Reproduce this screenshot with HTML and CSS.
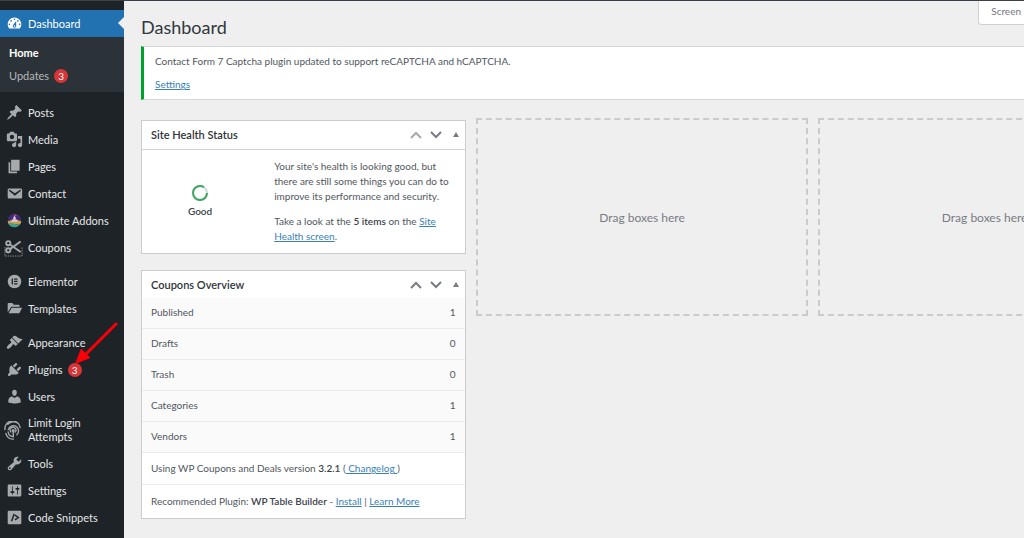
FILE: index.html
```html
<!DOCTYPE html>
<html lang="en">
<head>
<meta charset="utf-8">
<title>Dashboard</title>
<link rel="stylesheet" href="styles.css">
</head>
<body>
<div class="admin">
  <nav class="sidebar" aria-label="Main menu">
    <a class="item current" href="#">
      <svg class="icon" viewBox="0 0 20 20"><path d="M3.76 16h12.48c1.1-1.37 1.76-3.11 1.76-5 0-4.42-3.58-8-8-8s-8 3.58-8 8c0 1.89.66 3.63 1.76 5zM10 4c.55 0 1 .45 1 1s-.45 1-1 1-1-.45-1-1 .45-1 1-1zM6 6c.55 0 1 .45 1 1s-.45 1-1 1-1-.45-1-1 .45-1 1-1zm8 0c.55 0 1 .45 1 1s-.45 1-1 1-1-.45-1-1 .45-1 1-1zm-5.37 5.55L12 7v6c0 1.1-.9 2-2 2s-2-.9-2-2c0-.57.24-1.08.63-1.45zM4 10c.55 0 1 .45 1 1s-.45 1-1 1-1-.45-1-1 .45-1 1-1zm12 0c.55 0 1 .45 1 1s-.45 1-1 1-1-.45-1-1 .45-1 1-1zm-5 3c0-.55-.45-1-1-1s-1 .45-1 1 .45 1 1 1 1-.45 1-1z"/></svg>
      <span>Dashboard</span>
    </a>
    <div class="submenu">
      <a class="sub active" href="#">Home</a>
      <a class="sub" href="#">Updates <span class="count">3</span></a>
    </div>
    <div class="group">
      <a class="item" href="#">
        <svg class="icon" viewBox="0 0 20 20"><path d="M10.44 3.02l1.82-1.82 6.36 6.35-1.83 1.82c-1.05-.68-2.48-.57-3.41.36l-.75.75c-.92.93-1.04 2.35-.35 3.41l-1.83 1.82-2.41-2.41-2.8 2.79c-.42.42-3.38 2.71-3.8 2.29s1.86-3.39 2.28-3.81l2.79-2.79L4.1 9.36l1.83-1.82c1.05.69 2.48.57 3.4-.36l.75-.75c.93-.92 1.05-2.35.36-3.41z"/></svg>
        <span>Posts</span>
      </a>
      <a class="item" href="#">
        <svg class="icon" viewBox="0 0 20 20"><path d="M13 11V4c0-.55-.45-1-1-1h-1.67L9 1H5L3.67 3H2c-.55 0-1 .45-1 1v7c0 .55.45 1 1 1h10c.55 0 1-.45 1-1zM7 4.5c1.38 0 2.5 1.12 2.5 2.5S8.38 9.5 7 9.5 4.5 8.38 4.5 7 5.62 4.5 7 4.5zM14 6h5v10.5c0 1.38-1.12 2.5-2.5 2.5S14 17.88 14 16.5s1.12-2.5 2.5-2.5c.17 0 .34.02.5.05V9h-3V6zm-4 8.05V13h2v3.5c0 1.38-1.12 2.5-2.5 2.5S7 17.88 7 16.5 8.12 14 9.5 14c.17 0 .34.02.5.05z"/></svg>
        <span>Media</span>
      </a>
      <a class="item" href="#">
        <svg class="icon" viewBox="0 0 20 20"><path d="M6 15V2h10v13H6zm-1 1h8v2H3V5h2v11z"/></svg>
        <span>Pages</span>
      </a>
      <a class="item" href="#">
        <svg class="icon" viewBox="0 0 20 20"><path d="M3.87 4h13.25C18.37 4 19 4.59 19 5.79v8.42c0 1.19-.63 1.79-1.88 1.79H3.87c-1.25 0-1.88-.6-1.88-1.79V5.79c0-1.2.63-1.79 1.88-1.79zm6.62 8.6l6.74-5.53c.24-.2.43-.66.13-1.07-.29-.41-.82-.42-1.17-.17l-5.7 3.86L4.8 5.83c-.35-.25-.88-.24-1.17.17-.3.41-.11.87.13 1.07z"/></svg>
        <span>Contact</span>
      </a>
      <a class="item" href="#">
        <svg class="icon" viewBox="0 0 20 20"><circle cx="10" cy="10" r="8" fill="#412a78"/><path d="M2 11q8-3 16 0a8 8 0 0 1-1.500 3.700h-13A8 8 0 0 1 2 11z" fill="#c9a24a"/><path d="M3 14q3.500-2 7 0t7-.5a8 8 0 0 1-14 .5z" fill="#3fa08e"/><path d="M6.500 11.500V9.500l1-1 1 1V6.500l1.500-2 1.500 2v3l1-1 1 1v2z" fill="#e3c4de"/><path d="M10 2.500l3 1.200-3 1.300z" fill="#e05565"/></svg>
        <span>Ultimate Addons</span>
      </a>
      <a class="item" href="#">
        <svg class="icon wide" viewBox="0 0 20 20"><path d="M1 9.500V19h18V9.500" fill="none" stroke="#8c9196" stroke-width="1" stroke-dasharray="1.500 1"/><g fill="none" stroke="#a7aaad" stroke-width="2"><circle cx="4.500" cy="5.500" r="2.200"/><circle cx="4.500" cy="13" r="2.200"/><path d="M6.300 6.800L17.500 14.800M6.300 11.700L17.500 3.700"/></g></svg>
        <span>Coupons</span>
      </a>
    </div>
    <div class="group">
      <a class="item" href="#">
        <svg class="icon" viewBox="0 0 20 20"><circle cx="10" cy="10" r="8"/><path d="M6.700 6.500h1.500v7H6.700zM9.500 6.500h4V8h-4zM9.500 9.200h4v1.500h-4zM9.500 12h4v1.500h-4z" fill="#1d2327"/></svg>
        <span>Elementor</span>
      </a>
      <a class="item" href="#">
        <svg class="icon" viewBox="0 0 20 20"><path d="M2 14.500V4.500c0-.6.400-1 1-1h4.500l1.500 2h6c.6 0 1 .4 1 1V8H6.200z"/><path d="M6.700 9H19l-3.300 6.500H3z"/></svg>
        <span>Templates</span>
      </a>
    </div>
    <div class="group">
      <a class="item" href="#">
        <svg class="icon" viewBox="0 0 20 20"><path d="M14.480 11.060L7.410 3.990l1.500-1.500c.5-.56 2.300-.47 3.510.32 1.210.8 1.430 1.280 2.910 2.100 1.180.64 2.450 1.260 4.450.85zm-.71.71L6.700 4.700 4.930 6.470c-.39.39-.39 1.020 0 1.410l1.060 1.060c.39.39.39 1.030 0 1.420-.6.6-1.430 1.110-2.210 1.690-.35.26-.7.53-1.010.84C1.430 14.230.4 16.080 1.400 17.070c.99 1 2.840-.03 4.180-1.360.31-.31.58-.66.85-1.020.57-.78 1.080-1.610 1.690-2.210.39-.39 1.020-.39 1.410 0l1.060 1.060c.39.39 1.020.39 1.410 0z"/></svg>
        <span>Appearance</span>
      </a>
      <a class="item" href="#">
        <svg class="icon" viewBox="0 0 20 20"><path d="M13.110 4.360L9.870 7.600 8 5.730l3.240-3.240c.35-.34 1.050-.2 1.560.32.52.51.66 1.210.31 1.550zm-8 1.770l.91-1.120 9.010 9.010-1.190.84c-.71.71-2.630 1.160-3.820 1.160H6.140L4.900 17.260c-.59.59-1.540.59-2.120 0-.59-.58-.59-1.530 0-2.120l1.240-1.240v-3.880c0-1.130.4-3.190 1.090-3.890zm7.260 3.970l3.240-3.240c.34-.35 1.040-.21 1.550.31.52.51.66 1.210.31 1.550l-3.240 3.250z"/></svg>
        <span>Plugins</span><span class="count">3</span>
        <svg class="pointer" viewBox="0 0 44 44"><path d="M42 2L12 32" stroke="#fb0007" stroke-width="3" stroke-linecap="round"/><path d="M1 42L7 26.500l9.500 9.500z" fill="#fb0007"/></svg>
      </a>
      <a class="item" href="#">
        <svg class="icon" viewBox="0 0 20 20"><path d="M10 9.250c-2.270 0-2.730-3.440-2.730-3.440C7 4.020 7.820 2 9.970 2c2.160 0 2.980 2.020 2.710 3.810 0 0-.41 3.440-2.680 3.440zm0 2.570L12.720 10c2.390 0 4.520 2.330 4.520 4.530v2.490s-3.650 1.130-7.240 1.130c-3.650 0-7.240-1.130-7.240-1.130v-2.490c0-2.250 1.940-4.480 4.470-4.480z"/></svg>
        <span>Users</span>
      </a>
      <a class="item" href="#">
        <svg class="icon wide" viewBox="0 0 20 20"><g fill="none" stroke="#a7aaad" stroke-width="1.400" stroke-linecap="round"><path d="M4 3.500A9 9 0 0 1 15 2.500M1 9A8 8 0 0 1 17 7M2 13a7 7 0 0 0 8 6M4.500 9a5.500 5.500 0 1 1 9 5.500M4.300 11.500a6 6 0 0 0 5.200 5M7.200 11.500a3 3 0 1 1 4.500.2"/></g><circle cx="9.700" cy="10" r="1.600"/><path d="M9 10h1.500v7H9z"/></svg>
        <span>Limit Login Attempts</span>
      </a>
      <a class="item" href="#">
        <svg class="icon" viewBox="0 0 20 20"><path d="M16.680 9.770c-1.340 1.340-3.300 1.670-4.950.99l-5.410 6.520c-.99.99-2.590.99-3.580 0s-.99-2.590 0-3.570l6.520-5.420c-.68-1.650-.35-3.610.99-4.950 1.280-1.280 3.120-1.620 4.720-1.060l-2.890 2.890 2.820 2.820 2.860-2.870c.53 1.580.18 3.390-1.080 4.650zM3.810 16.210c.4.39 1.040.39 1.430 0 .4-.4.4-1.040 0-1.430-.39-.4-1.030-.4-1.430 0-.39.39-.39 1.030 0 1.430z"/></svg>
        <span>Tools</span>
      </a>
      <a class="item" href="#">
        <svg class="icon" viewBox="0 0 20 20"><path d="M18 16V4c0-.55-.45-1-1-1H3c-.55 0-1 .45-1 1v12c0 .55.45 1 1 1h14c.55 0 1-.45 1-1zM8 11h1c.55 0 1 .45 1 1s-.45 1-1 1H8v1.500c0 .28-.22.5-.5.5s-.5-.22-.5-.5V13H6c-.55 0-1-.45-1-1s.45-1 1-1h1V5.500c0-.28.22-.5.5-.5s.5.22.5.5V11zm5-2h-1c-.55 0-1-.45-1-1s.45-1 1-1h1V5.500c0-.28.22-.5.5-.5s.5.22.5.5V7h1c.55 0 1 .45 1 1s-.45 1-1 1h-1v5.500c0 .28-.22.5-.5.5s-.5-.22-.5-.5V9z"/></svg>
        <span>Settings</span>
      </a>
      <a class="item" href="#">
        <svg class="icon" viewBox="0 0 20 20"><rect x="2" y="2" width="16" height="16" rx="1.500"/><path d="M9.700 5.500L6.500 14.500M10.500 7.200l4 2.800-4 2.800" fill="none" stroke="#1d2327" stroke-width="1.700"/></svg>
        <span>Code Snippets</span>
      </a>
    </div>
  </nav>

  <main class="content">
    <header class="heading">
      <h1>Dashboard</h1>
      <button class="screen-tab" type="button">Screen</button>
    </header>
    <section class="notice">
      <p>Contact Form 7 Captcha plugin updated to support reCAPTCHA and hCAPTCHA.</p>
      <p><a href="#">Settings</a></p>
    </section>
    <div class="columns">
      <div class="stack">
        <section class="widget">
          <div class="widget-head">
            <h2>Site Health Status</h2>
            <button type="button" class="disabled" aria-label="Move up"><svg viewBox="0 0 12 12"><path d="M1 9l5-5 5 5"/></svg></button>
            <button type="button" aria-label="Move down"><svg viewBox="0 0 12 12"><path d="M1 3l5 5 5-5"/></svg></button>
            <button type="button" aria-label="Toggle panel"><svg viewBox="0 0 12 12"><path class="solid" d="M6 3l3 5H3z"/></svg></button>
          </div>
          <div class="health">
            <div class="gauge">
              <svg viewBox="0 0 18 18"><circle cx="9" cy="9" r="7" stroke="#d5dad7"/><circle cx="9" cy="9" r="7" stroke="#3fa765" stroke-dasharray="37 7"/></svg>
              <strong>Good</strong>
            </div>
            <div class="health-text">
              <p>Your site's health is looking good, but there are still some things you can do to improve its performance and security.</p>
              <p>Take a look at the <strong>5 items</strong> on the <a href="#">Site Health screen</a>.</p>
            </div>
          </div>
        </section>
        <section class="widget">
          <div class="widget-head plain">
            <h2>Coupons Overview</h2>
            <button type="button" aria-label="Move up"><svg viewBox="0 0 12 12"><path d="M1 9l5-5 5 5"/></svg></button>
            <button type="button" aria-label="Move down"><svg viewBox="0 0 12 12"><path d="M1 3l5 5 5-5"/></svg></button>
            <button type="button" aria-label="Toggle panel"><svg viewBox="0 0 12 12"><path class="solid" d="M6 3l3 5H3z"/></svg></button>
          </div>
          <table class="totals">
            <tr><th scope="row">Published</th><td>1</td></tr>
            <tr><th scope="row">Drafts</th><td>0</td></tr>
            <tr><th scope="row">Trash</th><td>0</td></tr>
            <tr><th scope="row">Categories</th><td>1</td></tr>
            <tr><th scope="row">Vendors</th><td>1</td></tr>
          </table>
          <p class="foot">Using WP Coupons and Deals version <strong>3.2.1</strong> (<a href="#">&nbsp;Changelog&nbsp;</a>)</p>
          <p class="foot">Recommended Plugin: <strong>WP Table Builder</strong> - <a href="#">Install</a> | <a href="#">Learn More</a></p>
        </section>
      </div>
      <div class="drop">Drag boxes here</div>
      <div class="drop">Drag boxes here</div>
    </div>
  </main>
</div>
</body>
</html>
```
FILE: styles.css
```css
* { box-sizing: border-box; }
body {
  margin: 0;
  background: #efeff0;
  color: #50575e;
  font: 10px/15px Lato, "Open Sans", sans-serif;
}
h1, h2, p { margin: 0; }
a { color: #3a7fb9; }
strong { font-weight: 600; color: #3c434a; }
.admin {
  display: flex;
  min-height: 100vh;
  border-top: 1px solid #3c4147;
}

.sidebar {
  flex: 0 0 124px;
  padding-top: 9px;
  background: #1d2327;
}
.item {
  position: relative;
  display: flex;
  align-items: center;
  gap: 5px;
  min-height: 27px;
  padding: 6px 4px;
  color: #e6e7e8;
  font-size: 11px;
  line-height: 14px;
  text-decoration: none;
}
.icon {
  flex: none;
  width: 17px;
  height: 17px;
  margin: -2px 0 -2px 2px;
  fill: #a7aaad;
}
.icon.wide { width: 19px; height: 19px; margin: -3px 0; }
.current { background: #2271b1; color: #fff; }
.current .icon { fill: #fff; }
.current::after {
  content: "";
  position: absolute;
  right: 0;
  top: 7px;
  border: 6px solid transparent;
  border-right-color: #efeff0;
  border-left: 0;
}
.submenu {
  display: flex;
  flex-direction: column;
  gap: 8px;
  padding: 8px 9px 9px;
  background: #2c3338;
}
.sub {
  display: flex;
  align-items: center;
  gap: 5px;
  color: #b5b8bb;
  font-size: 11px;
  line-height: 15px;
  text-decoration: none;
}
.sub.active { color: #fff; font-weight: 700; }
.count {
  width: 14px;
  height: 14px;
  border-radius: 7px;
  background: #d63638;
  color: #fff;
  font-size: 10px;
  line-height: 14px;
  text-align: center;
}
.group { padding-top: 7px; }
.pointer {
  position: absolute;
  left: 74px;
  bottom: 17px;
  width: 44px;
  height: 44px;
}

.content {
  flex: 1;
  min-width: 0;
  padding-left: 17px;
  overflow: hidden;
}
.heading {
  display: flex;
  justify-content: space-between;
  align-items: flex-start;
}
h1 {
  padding: 14px 0 7px;
  color: #32373c;
  font-size: 18px;
  font-weight: 400;
  line-height: 24px;
}
.screen-tab {
  padding: 3px 3px 5px 12px;
  border: 1px solid #d0d1d3;
  border-width: 0 0 1px 1px;
  border-radius: 0 0 0 3px;
  background: #fff;
  color: #72777c;
  font: 10px/15px Lato, "Open Sans", sans-serif;
}
.notice {
  display: flex;
  flex-direction: column;
  gap: 8px;
  padding: 7px 11px;
  border: 1px solid #d5d6d8;
  border-left: 3px solid #00a32a;
  border-right: 0;
  background: #fff;
}
.columns {
  display: grid;
  grid-template-columns: 325fr 333fr 333fr;
  gap: 10px;
  align-items: start;
  width: calc(100% + 127px);
  padding-top: 18px;
}
.stack {
  display: flex;
  flex-direction: column;
  gap: 16px;
  padding-top: 2px;
}
.widget { border: 1px solid #cbcdd0; background: #fff; }
.widget-head {
  display: flex;
  align-items: center;
  gap: 8px;
  padding: 6px 3px 7px 9px;
  border-bottom: 1px solid #cfd3d4;
}
.widget-head.plain { padding-bottom: 6px; border-bottom: 0; }
.widget-head h2 {
  flex: 1;
  color: #2f353a;
  font-size: 11px;
  font-weight: 600;
  line-height: 15px;
}
.widget-head button {
  display: flex;
  padding: 0;
  border: 0;
  background: none;
}
.widget-head svg {
  width: 12px;
  height: 12px;
  fill: none;
  stroke: #787c82;
  stroke-width: 2;
}
.widget-head .disabled svg { stroke: #a7aaad; }
.widget-head .solid { fill: #787c82; stroke: none; }
.health {
  display: grid;
  grid-template-columns: 36% 1fr;
  gap: 16px;
  padding: 9px 0;
}
.health-text { padding-right: 9px; }
.gauge {
  display: flex;
  flex-direction: column;
  align-items: center;
  justify-content: center;
  gap: 2px;
}
.gauge svg { width: 18px; height: 18px; fill: none; stroke-width: 2; }
.health-text {
  display: flex;
  flex-direction: column;
  gap: 10px;
}
.totals {
  width: 100%;
  border-spacing: 0;
  background: #fafafa;
}
.totals th, .totals td {
  padding: 7px 9px 8px;
  border-bottom: 1px solid #ececee;
  font-weight: 400;
  text-align: left;
}
.totals td { text-align: right; }
.foot { padding: 8px 9px; }
.foot + .foot { padding: 9px; border-top: 1px solid #ececee; }
.drop {
  display: flex;
  align-items: center;
  justify-content: center;
  min-height: 198px;
  border: 2px dashed #c9cbcd;
  color: #787c82;
  font-size: 12px;
}
```
